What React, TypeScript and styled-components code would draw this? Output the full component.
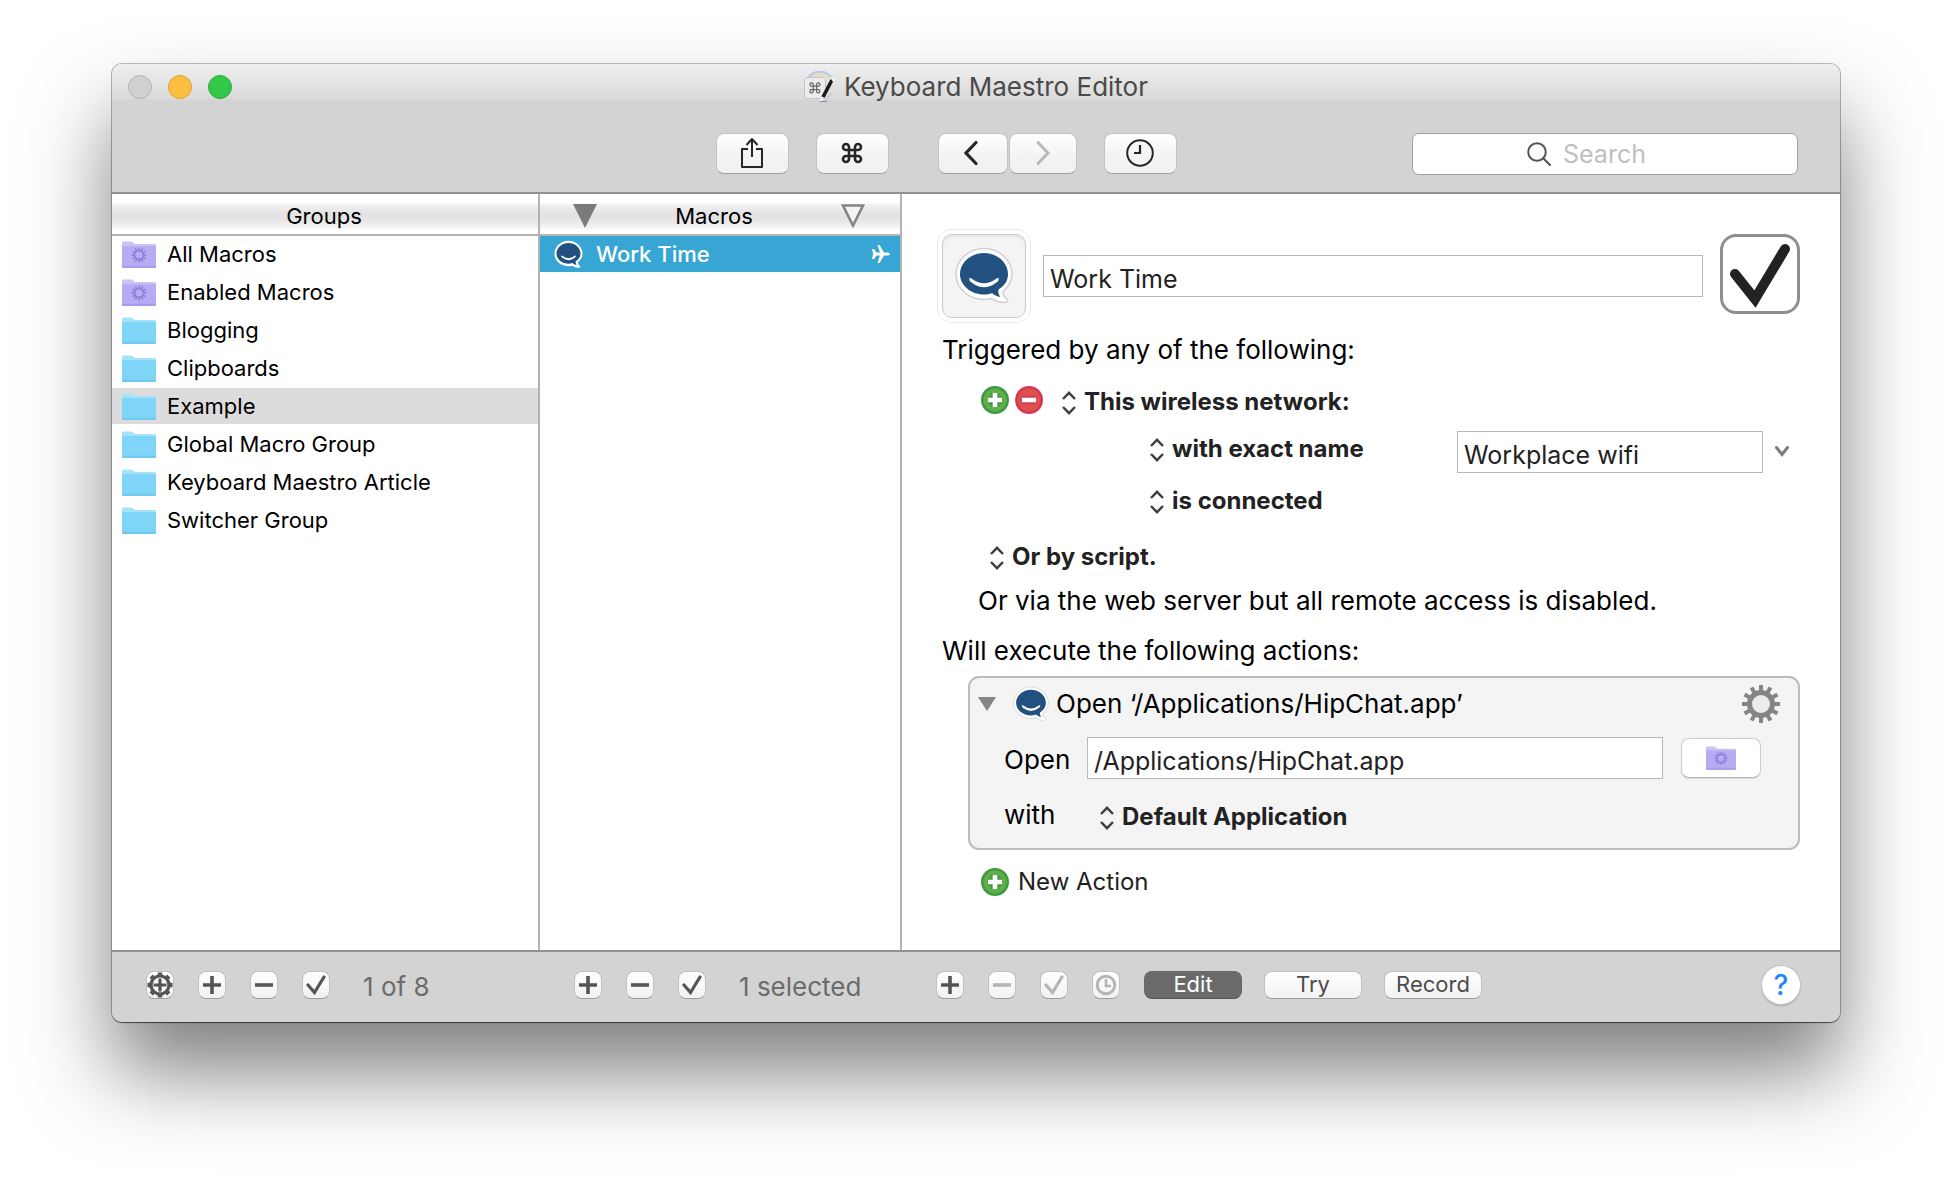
import React from "react";
import styled, { createGlobalStyle } from "styled-components";

const GlobalStyle = createGlobalStyle`
  *, *::before, *::after { box-sizing: border-box; }
  body {
    margin: 0;
    background: #fff;
    color: #000;
    font-family: Inter, "Liberation Sans", sans-serif;
    font-size: 26px;
    line-height: 32px;
  }
  button, input, select { font: inherit; color: inherit; margin: 0; padding: 0; }
  button { cursor: pointer; }
  h1, h2, p, ul { margin: 0; padding: 0; font: inherit; }
  ul { list-style: none; }
  svg { display: block; flex: none; }
`;

/* ---------- Window chrome ---------- */

const Desktop = styled.div`
  display: flex;
  min-height: 100vh;
  padding: 64px 112px 160px;
`;

const Window = styled.main`
  flex: 1;
  min-width: 0;
  display: flex;
  flex-direction: column;
  overflow: hidden;
  border-radius: 10px;
  background: #fff;
  box-shadow:
    0 0 0 1px rgba(0, 0, 0, 0.25),
    0 1px 1px rgba(0, 0, 0, 0.5),
    0 50px 84px rgba(0, 0, 0, 0.5);
`;

const Chrome = styled.header`
  border-bottom: 2px solid #929292;
  background: linear-gradient(#efefef, #dadada 35px, #d3d3d3 36px);
`;

const TitleBar = styled.div`
  display: grid;
  grid-template-columns: 1fr auto 1fr;
  align-items: center;
  height: 45px;
  padding: 0 16px;
`;

const Lights = styled.div`
  display: flex;
  gap: 16px;
`;

const Light = styled.button<{ $fill: string; $edge: string }>`
  width: 24px;
  height: 24px;
  border: 1px solid ${(p) => p.$edge};
  border-radius: 50%;
  background: ${(p) => p.$fill};
`;

const Title = styled.h1`
  display: flex;
  align-items: center;
  gap: 8px;
  color: #4a4a4a;
`;

const Toolbar = styled.div`
  display: flex;
  align-items: flex-start;
  height: 83px;
  padding: 24px 42px 0 calc(35% - 1px);
`;

const ToolGroup = styled.div`
  display: flex;
  gap: 1px;
  margin-right: 27px;
  & + &:nth-child(3) { margin-left: 22px; }
`;

const ToolButton = styled.button<{ $width?: number }>`
  display: grid;
  place-items: center;
  width: ${(p) => p.$width ?? 73}px;
  height: 41px;
  padding-bottom: 2px;
  border: 1px solid #c3c3c3;
  border-bottom-color: #a2a2a2;
  border-radius: 8px;
  background: linear-gradient(#fff, #f3f3f3 60%, #f1f1f1);
  color: #262626;
  &:disabled { color: #b9b9b9; }
`;

const SearchBox = styled.label`
  display: flex;
  align-items: center;
  justify-content: center;
  gap: 12px;
  width: 386px;
  height: 42px;
  margin-left: auto;
  border: 1px solid #a0a0a0;
  border-radius: 7px;
  background: #fff;
  color: #555;
`;

const SearchInput = styled.input`
  width: 120px;
  border: 0;
  outline: 0;
  background: none;
  font-size: 25px;
  &::placeholder { color: #bfbfbf; opacity: 1; }
`;

/* ---------- Columns ---------- */

const columns = "428px 362px minmax(0, 1fr)";

const Panes = styled.div`
  flex: 1;
  display: grid;
  grid-template-columns: ${columns};
`;

const ListPane = styled.section`
  border-right: 2px solid #b3b3b3;
  font-size: 22px;
`;

const ListHeader = styled.header`
  display: grid;
  grid-template-columns: 24px 1fr 24px;
  align-items: center;
  height: 42px;
  padding: 3px 35px 0 33px;
  border-bottom: 2px solid #b3b3b3;
  background: linear-gradient(#fff 9px, #f3f3f3 10px, #e4e4e4 19px, #e4e4e4 25px, #f4f4f4 34px, #fff 35px);
`;

const ListTitle = styled.h2<{ $inset?: number }>`
  grid-column: 2;
  padding-right: ${(p) => p.$inset ?? 0}px;
  text-align: center;
`;

const SortButton = styled.button`
  border: 0;
  background: none;
`;

const Rows = styled.ul`
  display: grid;
  gap: 2px;
`;

const GroupRow = styled.li<{ $selected?: boolean }>`
  display: flex;
  align-items: center;
  gap: 11px;
  height: 36px;
  padding: 0 10px;
  background: ${(p) => (p.$selected ? "#dcdcdc" : "none")};
`;

const MacroRow = styled.li`
  display: flex;
  align-items: center;
  gap: 13px;
  height: 36px;
  padding: 0 10px 0 14px;
  background: #37a6d5;
  color: #fff;
  font-weight: 500;
  & > svg:last-child { margin-left: auto; }
`;

/* ---------- Macro detail ---------- */

const Detail = styled.section`
  padding: 40px 40px 48px;
`;

const Line = styled.div<{ $top: number; $indent?: number; $gap?: number }>`
  display: flex;
  align-items: flex-start;
  gap: ${(p) => p.$gap ?? 0}px;
  margin-top: ${(p) => p.$top}px;
  padding-left: ${(p) => p.$indent ?? 0}px;
`;

const NameRow = styled.div`
  display: flex;
  align-items: center;
  gap: 17px;
`;

const IconWell = styled.button`
  display: grid;
  place-items: center;
  flex: none;
  width: 84px;
  height: 84px;
  border: 1px solid #cbcbcb;
  border-radius: 10px;
  background: #f4f4f4;
  box-shadow: 0 0 0 4px #fff, 0 0 0 5px #ececec, inset 0 2px 2px #e6e6e6;
`;

const TextField = styled.input<{ $width?: string }>`
  flex: ${(p) => (p.$width ? "none" : 1)};
  width: ${(p) => p.$width ?? "auto"};
  min-width: 0;
  height: 42px;
  padding: 5px 6px 0;
  border: 1px solid #b9b9b9;
  border-radius: 0;
  background: #fff;
  color: #222;
  font-size: 25px;
`;

const BigCheck = styled.label`
  display: grid;
  flex: none;
  align-self: flex-start;
  color: #222224;
  & > * { grid-area: 1 / 1; }
  & > svg { pointer-events: none; }
`;

const BigCheckInput = styled.input`
  appearance: none;
  width: 80px;
  height: 80px;
  border: 3px solid #8f8f8f;
  border-radius: 16px;
  background: #fff;
`;

const RoundButtons = styled.div`
  display: flex;
  gap: 6px;
  margin-right: 19px;
`;

const RoundButton = styled.button`
  display: flex;
  align-items: center;
  gap: 9px;
  height: 32px;
  border: 0;
  background: none;
  color: #222;
  font-size: 24px;
`;

const PopupLabel = styled.label`
  display: flex;
  align-items: center;
  gap: 8px;
  height: 32px;
  color: #404040;
  & > svg { margin-top: 6px; }
`;

const PopupSelect = styled.select`
  appearance: none;
  padding-top: 3px;
  border: 0;
  background: none;
  color: #222;
  font-size: 24px;
  font-weight: 700;
`;

const Combo = styled.div`
  display: flex;
  margin-left: auto;
`;

const ComboArrow = styled.button`
  display: grid;
  place-items: center;
  width: 37px;
  height: 42px;
  border: 0;
  background: none;
  color: #7d7d7d;
`;

const Card = styled.article`
  margin: 9px 0 16px 26px;
  padding: 10px 18px 17px 8px;
  border: 2px solid #bcbcbc;
  border-radius: 11px;
  background: #f4f4f4;
`;

const CardHead = styled.header`
  display: flex;
  align-items: center;
  height: 32px;
  gap: 7px;
`;

const PlainButton = styled.button<{ $push?: boolean }>`
  margin-left: ${(p) => (p.$push ? "auto" : "0")};
  border: 0;
  background: none;
`;

const Disclosure = styled(PlainButton)`
  width: 28px;
`;

const CardGrid = styled.div`
  display: grid;
  grid-template-columns: 83px minmax(0, 1fr) 80px;
  align-items: center;
  row-gap: 20px;
  margin-top: 17px;
  padding: 0 19px 0 26px;
`;

const CardLabel = styled.label<{ $low?: boolean }>`
  padding-top: ${(p) => (p.$low ? 4 : 0)}px;
`;

const PathCell = styled.div`
  display: flex;
  padding-right: 18px;
`;

const PopupCell = styled.div`
  padding-left: 13px;
`;

const FolderButton = styled.button`
  display: grid;
  place-items: center;
  height: 40px;
  border: 1px solid #cdcdcd;
  border-bottom-color: #b4b4b4;
  border-radius: 8px;
  background: #fff;
  box-shadow: 0 1px 1px #dcdcdc;
`;

/* ---------- Bottom bar ---------- */

const BottomBar = styled.footer`
  display: grid;
  grid-template-columns: ${columns};
  height: 72px;
  border-top: 2px solid #929292;
  background: #d3d3d3;
`;

const BarSection = styled.div`
  display: flex;
  align-items: center;
  gap: 24px;
  padding: 0 40px 4px 34px;
  color: #6b6b6b;
`;

const MiniButton = styled.button`
  display: grid;
  place-items: center;
  width: 28px;
  height: 28px;
  border: 1px solid #c2c2c2;
  border-bottom-color: #9e9e9e;
  border-radius: 8px;
  background: linear-gradient(#fff, #f1f1f1);
  color: #555;
  &:disabled { color: #b5b5b5; }
`;

const Status = styled.output`
  padding: 3px 0 0 9px;
`;

const Modes = styled.div`
  display: flex;
  gap: 22px;
`;

const ModeButton = styled.button<{ $active?: boolean }>`
  width: 98px;
  height: 28px;
  padding-bottom: 2px;
  border: 1px solid ${(p) => (p.$active ? "#686868" : "#c2c2c2")};
  border-bottom-color: ${(p) => (p.$active ? "#565656" : "#9e9e9e")};
  border-radius: 8px;
  background: ${(p) => (p.$active ? "#6a6a6a" : "linear-gradient(#fff, #f2f2f2)")};
  color: ${(p) => (p.$active ? "#fff" : "#4c4c4c")};
  font-size: 22px;
  line-height: 24px;
`;

const HelpButton = styled.button`
  width: 38px;
  height: 38px;
  margin-left: auto;
  border: 0;
  border-radius: 50%;
  background: #fff;
  box-shadow: 0 0 0 1px #c0c0c0, 0 2px 2px #a5a5a5;
  color: #1d86f8;
  font-size: 28px;
  font-weight: 500;
`;

/* ---------- Icons ---------- */

const stroke = {
  fill: "none",
  stroke: "currentColor",
  strokeLinecap: "round" as const,
  strokeLinejoin: "round" as const,
};

const COMMAND =
  "M15 6v12a3 3 0 1 0 3-3H6a3 3 0 1 0 3 3V6a3 3 0 1 0-3 3h12a3 3 0 1 0-3-3";

const teeth = Array.from({ length: 12 }, (_, i) => i * 30);

function GearShape({ color, hole }: { color: string; hole: string }) {
  return (
    <>
      {teeth.map((a) => (
        <path key={a} d="M-2 -19H2V-12H-2Z" fill={color} transform={`rotate(${a})`} />
      ))}
      <circle r="11.5" fill={hole} stroke={color} strokeWidth="5" />
    </>
  );
}

function GearIcon() {
  return (
    <svg width="38" height="38" viewBox="-19 -19 38 38">
      <GearShape color="#858585" hole="#ebebeb" />
    </svg>
  );
}

function Folder({ smart, width = 34 }: { smart?: boolean; width?: number }) {
  const back = smart ? "#c9c2f2" : "#a5e3fb";
  const front = smart ? "#b5acf4" : "#7fd5f8";
  const base = smart ? "#a79bea" : "#6fcaf0";
  return (
    <svg width={width} height={(width * 27) / 34} viewBox="0 0 34 27">
      <path d="M0 2Q0 .5 1.500 .5H9.500L13 3H32.500Q34 3 34 4.500V24H0Z" fill={back} />
      <path d="M0 5H34V25.500Q34 27 32.500 27H1.500Q0 27 0 25.500Z" fill={front} />
      <path d="M0 24.800H34V25.500Q34 27 32.500 27H1.500Q0 27 0 25.500Z" fill={base} />
      {smart && (
        <g transform="translate(17 14) scale(.4)">
          <GearShape color="#9080de" hole={front} />
        </g>
      )}
    </svg>
  );
}

function HipChat({ width, outline }: { width: number; outline?: string }) {
  return (
    <svg width={width} height={width} viewBox="0 0 58 58">
      <path
        d="M29 1.500C44 1.500 57 13 57 27.500C57 35 53 40 48 44.500C47.500 48 50 50.500 52.500 52.500C53.500 54.500 51 55.800 48 55.500C43 55 39 53 36 51.500C33 52.300 31 52.500 29 52.500C14 52.500 1 41.500 1 27.500C1 13 14 1.500 29 1.500Z"
        fill="#fff"
        stroke={outline ?? "none"}
        strokeWidth="1.500"
      />
      <path
        d="M29 6C42 6 53 15.500 53 27C53 34 49.500 38.500 43.500 42.500C43 45.500 43.500 47.500 45.500 50C42 49.500 39 48 37 46C34.500 47 31.500 47.500 29 47.500C16 47.500 5 38.500 5 27C5 15.500 16 6 29 6Z"
        fill="#22507f"
      />
      <path
        d="M14 31.500Q15 30.500 16.500 31.500Q29 41 41.500 31.500Q43 30.500 44 31.500Q44 33.500 41.500 35.500Q29 45 16.500 35.500Q14 33.500 14 31.500Z"
        fill="#fff"
      />
    </svg>
  );
}

function MaestroIcon() {
  return (
    <svg width="32" height="32" viewBox="0 0 32 32">
      <path d="M5 6A14 14 0 0 1 27 6" fill="none" stroke="#bccbe2" strokeWidth="2.500" />
      <path d="M8 7A12 12 0 0 1 25 8" fill="none" stroke="#eed9bd" strokeWidth="2.500" />
      <path d="M22 29Q25 26 27 22" fill="none" stroke="#c3cfe6" strokeWidth="2" />
      <rect x=".5" y="6.500" width="21" height="21" rx="2.500" fill="#ececee" stroke="#c4c6ca" />
      <g transform="translate(4.200 10.200) scale(.56)" color="#666">
        <path d={COMMAND} {...stroke} strokeWidth="2.200" />
      </g>
      <path d="M28 9L19 26" stroke="#1b1b1f" strokeWidth="3.600" />
      <path d="M31 7L29 10.500M18.500 27L16.500 30" stroke="#f6f6f6" strokeWidth="2.500" />
      <path d="M16 30.500H23" stroke="#8e8e8e" />
    </svg>
  );
}

function UpDown() {
  return (
    <svg width="14" height="24" viewBox="0 0 14 24">
      <path d="M1 8L7 1.800L13 8M1 16L7 22.200L13 16" {...stroke} strokeWidth="2.500" strokeLinecap="butt" strokeLinejoin="miter" />
    </svg>
  );
}

function RoundSign({ minus }: { minus?: boolean }) {
  const rim = minus ? "#d63853" : "#3e9b42";
  const core = minus ? "#dd5050" : "#62ae49";
  const sign = minus ? "M7 14H21" : "M14 7V21M7 14H21";
  return (
    <svg width="28" height="28" viewBox="0 0 28 28">
      <circle cx="14" cy="14" r="12.700" fill={core} stroke={rim} strokeWidth="2.600" />
      <path d={sign} stroke={rim} strokeWidth="8.500" />
      <path d={sign} stroke="#fff" strokeWidth="4.600" />
    </svg>
  );
}

function Sign({ plus }: { plus?: boolean }) {
  return (
    <svg width="18" height="18" viewBox="0 0 18 18">
      <path d={plus ? "M9 0V18M0 9H18" : "M0 9H18"} stroke="currentColor" strokeWidth="3.600" />
    </svg>
  );
}

function SmallCheck() {
  return (
    <svg width="20" height="20" viewBox="0 0 20 20">
      <path d="M2 10L8.500 17.500L18 2" {...stroke} strokeWidth="3.200" strokeLinejoin="miter" />
    </svg>
  );
}

function GearPlus() {
  return (
    <svg width="26" height="26" viewBox="-13 -13 26 26" color="#555">
      {[0, 45, 90, 135, 180, 225, 270, 315].map((a) => (
        <path key={a} d="M-2.200 -12.500H2.200V-8H-2.200Z" fill="currentColor" transform={`rotate(${a})`} />
      ))}
      <circle r="9" fill="none" stroke="currentColor" strokeWidth="3.200" />
      <path d="M0 -6.500V6.500M-6.500 0H6.500" stroke="currentColor" strokeWidth="3.200" />
    </svg>
  );
}

function Popup({ text, label }: { text: string; label: string }) {
  return (
    <PopupLabel>
      <UpDown />
      <PopupSelect aria-label={label}>
        <option>{text}</option>
      </PopupSelect>
    </PopupLabel>
  );
}

/* ---------- App ---------- */

const groups = [
  { name: "All Macros", smart: true },
  { name: "Enabled Macros", smart: true },
  { name: "Blogging" },
  { name: "Clipboards" },
  { name: "Example", selected: true },
  { name: "Global Macro Group" },
  { name: "Keyboard Maestro Article" },
  { name: "Switcher Group" },
];

export default function App() {
  return (
    <>
      <GlobalStyle />
      <Desktop>
        <Window>
          <Chrome>
            <TitleBar>
              <Lights>
                <Light $fill="#d0d0d0" $edge="#b2b2b2" aria-label="Close" />
                <Light $fill="#fdbe41" $edge="#e2a136" aria-label="Minimize" />
                <Light $fill="#34c84a" $edge="#2bac38" aria-label="Zoom" />
              </Lights>
              <Title>
                <MaestroIcon />
                Keyboard Maestro Editor
              </Title>
            </TitleBar>
            <Toolbar>
              <ToolGroup>
                <ToolButton aria-label="Share">
                  <svg width="24" height="32" viewBox="0 0 24 32">
                    <path d="M8 12H2V30H22V12H16M12 20V2M6.500 8L12 2L17.500 8" {...stroke} strokeWidth="2" strokeLinecap="butt" />
                  </svg>
                </ToolButton>
              </ToolGroup>
              <ToolGroup>
                <ToolButton aria-label="Hot keys">
                  <svg width="24" height="24" viewBox="0 0 24 24">
                    <path d={COMMAND} {...stroke} strokeWidth="2.600" />
                  </svg>
                </ToolButton>
              </ToolGroup>
              <ToolGroup>
                <ToolButton $width={70} aria-label="Back">
                  <svg width="20" height="26" viewBox="0 0 20 26">
                    <path d="M13 2.500L3 13L13 23.500" {...stroke} strokeWidth="3.200" strokeLinejoin="miter" />
                  </svg>
                </ToolButton>
                <ToolButton $width={68} disabled aria-label="Forward">
                  <svg width="16" height="26" viewBox="0 0 16 26">
                    <path d="M3 2.500L13 13L3 23.500" {...stroke} strokeWidth="3" strokeLinejoin="miter" />
                  </svg>
                </ToolButton>
              </ToolGroup>
              <ToolGroup>
                <ToolButton aria-label="Recent">
                  <svg width="28" height="28" viewBox="0 0 28 28">
                    <circle cx="14" cy="14" r="12.800" {...stroke} strokeWidth="2" />
                    <path d="M14 6V14H8" {...stroke} strokeWidth="2.200" strokeLinecap="butt" strokeLinejoin="miter" />
                  </svg>
                </ToolButton>
              </ToolGroup>
              <SearchBox>
                <svg width="24" height="24" viewBox="0 0 24 24">
                  <circle cx="10" cy="10" r="8.800" {...stroke} strokeWidth="2" />
                  <path d="M16.200 16.200L23 23" {...stroke} strokeWidth="2.200" />
                </svg>
                <SearchInput type="text" placeholder="Search" aria-label="Search" />
              </SearchBox>
            </Toolbar>
          </Chrome>

          <Panes>
            <ListPane>
              <ListHeader>
                <ListTitle>Groups</ListTitle>
              </ListHeader>
              <Rows>
                {groups.map((g) => (
                  <GroupRow key={g.name} $selected={g.selected}>
                    <Folder smart={g.smart} />
                    {g.name}
                  </GroupRow>
                ))}
              </Rows>
            </ListPane>

            <ListPane>
              <ListHeader>
                <SortButton aria-label="Sort macros">
                  <svg width="24" height="24" viewBox="0 0 24 24">
                    <path d="M0 0H24L12 24Z" fill="#7b7b7b" />
                  </svg>
                </SortButton>
                <ListTitle $inset={10}>Macros</ListTitle>
                <SortButton aria-label="Filter macros">
                  <svg width="24" height="24" viewBox="0 0 24 24">
                    <path d="M2 1.500H22L12 21.500Z" fill="#f4f4f4" stroke="#858585" strokeWidth="2.600" />
                  </svg>
                </SortButton>
              </ListHeader>
              <Rows>
                <MacroRow>
                  <HipChat width={29} />
                  Work Time
                  <svg width="18" height="18" viewBox="0 0 18 18" fill="#fff">
                    <path d="M0 4H2L4.500 7.500H8L5.500 0H7.500L12 7.500H16Q18 8 18 9Q18 10 16 10.500H12L7.500 18H5.500L8 10.500H4.500L2 14H0L1.200 9Z" />
                  </svg>
                </MacroRow>
              </Rows>
            </ListPane>

            <Detail>
              <NameRow>
                <IconWell aria-label="Macro icon">
                  <HipChat width={58} outline="#cfcfcf" />
                </IconWell>
                <TextField defaultValue="Work Time" aria-label="Macro name" />
                <BigCheck>
                  <BigCheckInput type="checkbox" defaultChecked aria-label="Macro enabled" />
                  <svg width="80" height="80" viewBox="0 0 80 80">
                    <path d="M15 40L35 65L65 15" {...stroke} strokeWidth="10" strokeLinejoin="miter" />
                  </svg>
                </BigCheck>
              </NameRow>

              <Line $top={16}>
                <p>Triggered by any of the following:</p>
              </Line>
              <Line $top={18} $indent={39}>
                <RoundButtons>
                  <RoundButton aria-label="Add trigger"><RoundSign /></RoundButton>
                  <RoundButton aria-label="Remove trigger"><RoundSign minus /></RoundButton>
                </RoundButtons>
                <Popup text="This wireless network:" label="Trigger type" />
              </Line>
              <Line $top={15} $indent={208}>
                <Popup text="with exact name" label="Name match" />
                <Combo>
                  <TextField $width="306px" defaultValue="Workplace wifi" aria-label="Network name" />
                  <ComboArrow aria-label="Choose network">
                    <svg width="14" height="12" viewBox="0 0 14 12">
                      <path d="M1.500 1.500L7 8.500L12.500 1.500" {...stroke} strokeWidth="3" strokeLinejoin="miter" />
                    </svg>
                  </ComboArrow>
                </Combo>
              </Line>
              <Line $top={10} $indent={208}>
                <Popup text="is connected" label="Network state" />
              </Line>
              <Line $top={24} $indent={48}>
                <Popup text="Or by script." label="Script trigger" />
              </Line>
              <Line $top={14} $indent={36}>
                <p>Or via the web server but all remote access is disabled.</p>
              </Line>
              <Line $top={18}>
                <p>Will execute the following actions:</p>
              </Line>

              <Card>
                <CardHead>
                  <Disclosure aria-label="Collapse action">
                    <svg width="18" height="14" viewBox="0 0 18 14">
                      <path d="M0 0H18L9 14Z" fill="#868686" />
                    </svg>
                  </Disclosure>
                  <HipChat width={36} outline="#d8d8d8" />
                  <h2>Open ‘/Applications/HipChat.app’</h2>
                  <PlainButton $push aria-label="Action options"><GearIcon /></PlainButton>
                </CardHead>
                <CardGrid>
                  <CardLabel htmlFor="open-path" $low>Open</CardLabel>
                  <PathCell>
                    <TextField id="open-path" defaultValue="/Applications/HipChat.app" />
                  </PathCell>
                  <FolderButton aria-label="Choose application"><Folder smart width={30} /></FolderButton>
                  <CardLabel as="span">with</CardLabel>
                  <PopupCell>
                    <Popup text="Default Application" label="Open with" />
                  </PopupCell>
                </CardGrid>
              </Card>

              <Line $top={16} $indent={39}>
                <RoundButton><RoundSign />New Action</RoundButton>
              </Line>
            </Detail>
          </Panes>

          <BottomBar>
            <BarSection>
              <MiniButton aria-label="Group options"><GearPlus /></MiniButton>
              <MiniButton aria-label="Add group"><Sign plus /></MiniButton>
              <MiniButton aria-label="Remove group"><Sign /></MiniButton>
              <MiniButton aria-label="Enable group"><SmallCheck /></MiniButton>
              <Status>1 of 8</Status>
            </BarSection>
            <BarSection>
              <MiniButton aria-label="Add macro"><Sign plus /></MiniButton>
              <MiniButton aria-label="Remove macro"><Sign /></MiniButton>
              <MiniButton aria-label="Enable macro"><SmallCheck /></MiniButton>
              <Status>1 selected</Status>
            </BarSection>
            <BarSection>
              <MiniButton aria-label="Add action"><Sign plus /></MiniButton>
              <MiniButton disabled aria-label="Remove action"><Sign /></MiniButton>
              <MiniButton disabled aria-label="Enable action"><SmallCheck /></MiniButton>
              <MiniButton disabled aria-label="Time action">
                <svg width="22" height="22" viewBox="0 0 22 22">
                  <circle cx="11" cy="11" r="8.800" {...stroke} strokeWidth="3" />
                  <path d="M11 5V12H16" {...stroke} strokeWidth="2.600" strokeLinecap="butt" strokeLinejoin="miter" />
                </svg>
              </MiniButton>
              <Modes>
                <ModeButton $active>Edit</ModeButton>
                <ModeButton>Try</ModeButton>
                <ModeButton>Record</ModeButton>
              </Modes>
              <HelpButton aria-label="Help">?</HelpButton>
            </BarSection>
          </BottomBar>
        </Window>
      </Desktop>
    </>
  );
}
